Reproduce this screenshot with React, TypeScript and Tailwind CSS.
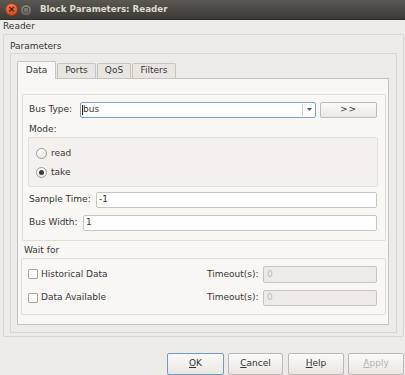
import React from "react";

const font = { fontFamily: '"DejaVu Sans", "Liberation Sans", sans-serif' };

function Radio({ checked, label }: { checked?: boolean; label: string }) {
  return (
    <div className="flex items-center h-[11px]">
      <span className="w-[11px] h-[11px] rounded-full border border-[#9d9892] bg-gradient-to-b from-[#ffffff] to-[#ece9e5] flex items-center justify-center">
        {checked && <span className="w-[5px] h-[5px] rounded-full bg-[#3a3a3a]" />}
      </span>
      <span className="ml-[4px] leading-[11px]">{label}</span>
    </div>
  );
}

function Check({ label }: { label: string }) {
  return (
    <div className="flex items-center flex-1">
      <span className="w-[10px] h-[10px] border border-[#aaa59f] bg-white rounded-[1px]" />
      <span className="ml-[3px]">{label}</span>
    </div>
  );
}

function DialogButton({ label, width, focus, disabled }: { label: React.ReactNode; width: string; focus?: boolean; disabled?: boolean }) {
  return (
    <button
      className={
        "h-[22px] rounded-[2px] border bg-gradient-to-b from-[#fbfaf9] to-[#e9e6e2] flex items-center justify-center " +
        width +
        (focus ? " border-[#6f9bcb]" : " border-[#bdb8b2]") +
        (disabled ? " text-[#b5b1ab]" : " text-[#333333]")
      }
    >
      {label}
    </button>
  );
}

export default function App() {
  return (
    <div
      style={font}
      className="w-[405px] h-[375px] overflow-hidden bg-[#edebe7] text-[9px] text-[#363636] flex flex-col"
    >
      {/* Title bar */}
      <div className="h-[20px] shrink-0 bg-gradient-to-b from-[#5b5852] to-[#3c3b37] border-b border-[#2e2d2a] flex items-center">
        <span className="ml-[5px] w-[13px] h-[13px] rounded-full bg-gradient-to-b from-[#f57a4e] to-[#d9471c] border border-[#9e3815] flex items-center justify-center text-[#3b1508] text-[9px] leading-none font-bold">
          ×
        </span>
        <span className="ml-[2px] w-[12px] h-[12px] rounded-full bg-gradient-to-b from-[#8a8781] to-[#6a6762] border border-[#4a4844] flex items-center justify-center">
          <span className="w-[6px] h-[6px] rounded-[2px] border border-[#4f4d49]" />
        </span>
        <span className="ml-[8px] text-[#dfdbd2] font-bold text-[8.7px]">Block Parameters: Reader</span>
      </div>

      {/* Reader label */}
      <div className="h-[14px] pl-[3px] flex items-center">Reader</div>

      {/* Outer Parameters group */}
      <div className="ml-[3px] w-[401px] h-[307px] border border-[#d8d4cf] rounded-[2px] flex flex-col">
        <div className="pl-[6px] pt-[6px] pb-[2px] leading-[10px]">Parameters</div>

        <div className="ml-[6px] w-[387px] h-[280px] border border-[#d9d5d0] pl-[6px] pt-[7px]">
          {/* Tabs */}
          <div className="flex items-end h-[17px]">
            <div className="w-[39px] h-[18px] -mb-px z-10 bg-[#f9f7f4] border border-b-0 border-[#c6c2bc] rounded-t-[2px] flex items-center justify-center pt-px">
              Data
            </div>
            <div className="ml-px w-[39px] h-[15px] bg-[#e9e6e2] border border-b-0 border-[#c6c2bc] rounded-t-[2px] flex items-center justify-center">
              Ports
            </div>
            <div className="ml-px w-[34px] h-[15px] bg-[#e9e6e2] border border-b-0 border-[#c6c2bc] rounded-t-[2px] flex items-center justify-center">
              QoS
            </div>
            <div className="ml-px w-[44px] h-[15px] bg-[#e9e6e2] border border-b-0 border-[#c6c2bc] rounded-t-[2px] flex items-center justify-center">
              Filters
            </div>
          </div>

          {/* Tab panel */}
          <div className="w-[372px] h-[247px] bg-[#f9f7f4] border border-[#c6c2bc] pl-[4px] pt-[15px]">
            {/* Data group */}
            <div className="w-[364px] h-[147px] border border-[#e0dcd7] rounded-[2px] pl-[6px] pt-[7px]">
              <div className="flex items-center h-[16px]">
                <span className="w-[51px]">Bus Type:</span>
                <div className="w-[236px] h-[16px] bg-white border border-[#7aa3d0] rounded-[2px] flex items-center">
                  <span className="ml-[1px] w-px h-[10px] bg-[#222222]" />
                  <span className="flex-1">bus</span>
                  <span className="w-px h-[12px] bg-[#d4d0cb]" />
                  <span className="w-[12px] flex items-center justify-center">
                    <svg width="5" height="3" viewBox="0 0 5 3">
                      <path d="M0 0 L5 0 L2.5 3 Z" fill="#555555" />
                    </svg>
                  </span>
                </div>
                <button className="ml-[4px] w-[57px] h-[16px] bg-gradient-to-b from-[#fbfaf9] to-[#ebe8e4] border border-[#c0bbb5] rounded-[2px] flex items-center justify-center tracking-[1px]">
                  &gt;&gt;
                </button>
              </div>

              <div className="mt-[6px] leading-[11px] h-[11px]">Mode:</div>

              <div className="-ml-px mt-[2px] w-[350px] h-[50px] bg-[#f4f1ed] border border-[#e2ded9] rounded-[2px] pl-[7px] pt-[10px] flex flex-col gap-[8px]">
                <Radio label="read" />
                <Radio label="take" checked />
              </div>

              <div className="mt-[5px] flex items-center h-[16px]">
                <span className="w-[67px]">Sample Time:</span>
                <div className="w-[281px] h-[16px] bg-white border border-[#c9c4be] rounded-[2px] pl-[2px] flex items-center">-1</div>
              </div>

              <div className="mt-[7px] flex items-center h-[16px]">
                <span className="w-[54px]">Bus Width:</span>
                <div className="w-[294px] h-[16px] bg-white border border-[#c9c4be] rounded-[2px] pl-[2px] flex items-center">1</div>
              </div>
            </div>

            <div className="ml-[2px] mt-[4px] leading-[11px] h-[11px]">Wait for</div>

            {/* Wait for group */}
            <div className="-ml-px mt-[2px] w-[365px] h-[57px] border border-[#e0dcd7] rounded-[2px] pl-[6px] pr-[8px] pt-[7px] flex flex-col gap-[7px]">
              <div className="flex items-center h-[17px]">
                <Check label="Historical Data" />
                <span className="w-[56px]">Timeout(s):</span>
                <div className="w-[114px] h-[17px] bg-[#eeebe7] border border-[#c9c4be] rounded-[2px] pl-[3px] flex items-center text-[#bcb8b2]">0</div>
              </div>
              <div className="flex items-center h-[16px]">
                <Check label="Data Available" />
                <span className="w-[56px]">Timeout(s):</span>
                <div className="w-[114px] h-[16px] bg-[#eeebe7] border border-[#c9c4be] rounded-[2px] pl-[3px] flex items-center text-[#bcb8b2]">0</div>
              </div>
            </div>
          </div>
        </div>
      </div>

      {/* Dialog buttons */}
      <div className="mt-[16px] flex justify-end pr-[1px]">
        <DialogButton width="w-[57px]" focus label={<span><span className="underline">O</span>K</span>} />
        <div className="ml-[4px]">
          <DialogButton width="w-[55px]" label={<span><span className="underline">C</span>ancel</span>} />
        </div>
        <div className="ml-[5px]">
          <DialogButton width="w-[56px]" label={<span><span className="underline">H</span>elp</span>} />
        </div>
        <div className="ml-[4px]">
          <DialogButton width="w-[56px]" disabled label={<span><span className="underline">A</span>pply</span>} />
        </div>
      </div>
    </div>
  );
}
